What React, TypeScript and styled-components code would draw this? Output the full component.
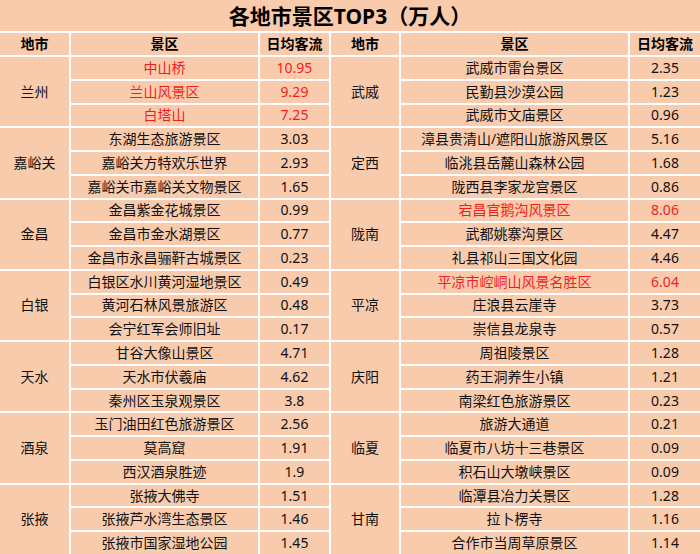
import React from "react";
import styled, { createGlobalStyle } from "styled-components";

const Global = createGlobalStyle`
  html, body { margin: 0; padding: 0; background: #ffffff; }
  body { font-family: "Noto Sans", "Noto Sans CJK SC", sans-serif; }
`;

const Sheet = styled.div`
  width: 700px;
  height: 554px;
  display: grid;
  grid-template-columns: 69px 187px 69px 68px 227px 70px;
  grid-template-rows: 31px 22px repeat(21, 1fr);
  gap: 2px;
  background: #ffffff;
`;

const Cell = styled.div<{ $span?: number; $red?: boolean }>`
  background: #f8cbad;
  display: flex;
  align-items: center;
  justify-content: center;
  font-size: 14px;
  color: ${(p) => (p.$red ? "#f01d1d" : "#111111")};
  white-space: nowrap;
  overflow: hidden;
  grid-row: ${(p) => (p.$span ? `span ${p.$span}` : "auto")};
  line-height: 1;
`;

const Title = styled(Cell)`
  grid-column: 1 / -1;
  font-size: 21px;
  font-weight: 700;
  color: #000000;
  padding-top: 1px;
`;

const Head = styled(Cell)`
  font-weight: 700;
  color: #000000;
`;

type Spot = [string, string, boolean?];
type Group = { city: string; spots: Spot[] };

const left: Group[] = [
  { city: "兰州", spots: [["中山桥", "10.95", true], ["兰山风景区", "9.29", true], ["白塔山", "7.25", true]] },
  { city: "嘉峪关", spots: [["东湖生态旅游景区", "3.03"], ["嘉峪关方特欢乐世界", "2.93"], ["嘉峪关市嘉峪关文物景区", "1.65"]] },
  { city: "金昌", spots: [["金昌紫金花城景区", "0.99"], ["金昌市金水湖景区", "0.77"], ["金昌市永昌骊靬古城景区", "0.23"]] },
  { city: "白银", spots: [["白银区水川黄河湿地景区", "0.49"], ["黄河石林风景旅游区", "0.48"], ["会宁红军会师旧址", "0.17"]] },
  { city: "天水", spots: [["甘谷大像山景区", "4.71"], ["天水市伏羲庙", "4.62"], ["秦州区玉泉观景区", "3.8"]] },
  { city: "酒泉", spots: [["玉门油田红色旅游景区", "2.56"], ["莫高窟", "1.91"], ["西汉酒泉胜迹", "1.9"]] },
  { city: "张掖", spots: [["张掖大佛寺", "1.51"], ["张掖芦水湾生态景区", "1.46"], ["张掖市国家湿地公园", "1.45"]] },
];

const right: Group[] = [
  { city: "武威", spots: [["武威市雷台景区", "2.35"], ["民勤县沙漠公园", "1.23"], ["武威市文庙景区", "0.96"]] },
  { city: "定西", spots: [["漳县贵清山/遮阳山旅游风景区", "5.16"], ["临洮县岳麓山森林公园", "1.68"], ["陇西县李家龙宫景区", "0.86"]] },
  { city: "陇南", spots: [["宕昌官鹅沟风景区", "8.06", true], ["武都姚寨沟景区", "4.47"], ["礼县祁山三国文化园", "4.46"]] },
  { city: "平凉", spots: [["平凉市崆峒山风景名胜区", "6.04", true], ["庄浪县云崖寺", "3.73"], ["崇信县龙泉寺", "0.57"]] },
  { city: "庆阳", spots: [["周祖陵景区", "1.28"], ["药王洞养生小镇", "1.21"], ["南梁红色旅游景区", "0.23"]] },
  { city: "临夏", spots: [["旅游大通道", "0.21"], ["临夏市八坊十三巷景区", "0.09"], ["积石山大墩峡景区", "0.09"]] },
  { city: "甘南", spots: [["临潭县冶力关景区", "1.28"], ["拉卜楞寺", "1.16"], ["合作市当周草原景区", "1.14"]] },
];

export default function App() {
  const cells: React.ReactNode[] = [];
  left.forEach((lg, gi) => {
    const rg = right[gi];
    for (let j = 0; j < 3; j++) {
      const ls = lg.spots[j];
      const rs = rg.spots[j];
      if (j === 0) cells.push(<Cell key={`lc${gi}`} $span={3}>{lg.city}</Cell>);
      cells.push(<Cell key={`ls${gi}${j}`} $red={ls[2]}>{ls[0]}</Cell>);
      cells.push(<Cell key={`lv${gi}${j}`} $red={ls[2]}>{ls[1]}</Cell>);
      if (j === 0) cells.push(<Cell key={`rc${gi}`} $span={3}>{rg.city}</Cell>);
      cells.push(<Cell key={`rs${gi}${j}`} $red={rs[2]}>{rs[0]}</Cell>);
      cells.push(<Cell key={`rv${gi}${j}`} $red={rs[2]}>{rs[1]}</Cell>);
    }
  });
  return (
    <>
      <Global />
      <Sheet>
        <Title>各地市景区TOP3（万人）</Title>
        <Head>地市</Head>
        <Head>景区</Head>
        <Head>日均客流</Head>
        <Head>地市</Head>
        <Head>景区</Head>
        <Head>日均客流</Head>
        {cells}
      </Sheet>
    </>
  );
}
